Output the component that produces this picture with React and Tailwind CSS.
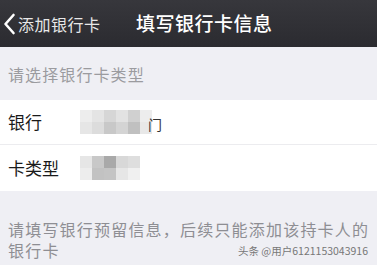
const font = { fontFamily: '"Noto Sans CJK SC", "Noto Sans", sans-serif' };

const Mosaic = ({ cells }) => (
  <div className="flex h-[24px]">
    {cells.map((c, i) => (
      <div key={i} className="flex flex-col w-[12px]">
        <div className="h-[12px]" style={{ background: c[0] }} />
        <div className="h-[12px]" style={{ background: c[1] }} />
      </div>
    ))}
  </div>
);

const App = () => {
  return (
    <div className="w-[377px] h-[265px] bg-[#efeff4] overflow-hidden" style={font}>
      <div className="h-[47px] flex items-center bg-gradient-to-b from-[#37373c] to-[#2b2b30] text-white relative">
        <div className="flex items-center pl-[3px]">
          <svg width="13" height="22" viewBox="0 0 13 22" className="mr-[2px]">
            <path d="M10.5 2 L2.5 11 L10.5 20" stroke="white" strokeWidth="2.6" fill="none" strokeLinecap="round" strokeLinejoin="round" />
          </svg>
          <span className="text-[16px] tracking-[0.5px] text-[#e8e8e8]">添加银行卡</span>
        </div>
        <span className="absolute left-[136px] text-[19px] font-medium tracking-[0.5px]">填写银行卡信息</span>
      </div>
      <div className="h-[53px] flex items-center px-[8px] pt-[1px] text-[16px] text-[#9b9b9f] tracking-[1.1px]">
        请选择银行卡类型
      </div>
      <div className="bg-white">
        <div className="h-[45px] flex items-center pl-[8px] border-b border-[#ececef]">
          <span className="w-[72px] text-[17px] text-[#1a1a1a]">银行</span>
          <Mosaic cells={[["#ededed", "#e6e6e6"], ["#e4e4e4", "#dcdcdc"], ["#d6d6d6", "#c8c8c8"], ["#e2e2e2", "#d4d4d4"], ["#d0d0d0", "#c0c0c0"], ["#ededed", "#e8e8e8"]]} />
          <span className="text-[14px] text-[#333] ml-[-4px] mt-[4px]">门</span>
        </div>
        <div className="h-[46px] flex items-center pl-[8px]">
          <span className="w-[72px] text-[17px] text-[#1a1a1a]">卡类型</span>
          <Mosaic cells={[["#e6e6e6", "#ededed"], ["#c8c8c8", "#c2c2c2"], ["#a9a9a9", "#c4c4c4"], ["#d8d8d8", "#e6e6e6"], ["#dedede", "#f0f0f0"]]} />
        </div>
      </div>
      <div className="px-[8px] pt-[28px] text-[16px] leading-[21px] text-[#8e8e93] tracking-[1.2px]">
        <div className="whitespace-nowrap">请填写银行预留信息，后续只能添加该持卡人的</div>
        <div className="flex items-center justify-between">
          <span>银行卡</span>
          <span className="text-[10.5px] text-[#777] tracking-[0px] mr-[1px]">头条 @用户6121153043916</span>
        </div>
      </div>
    </div>
  );
};

export default App;
